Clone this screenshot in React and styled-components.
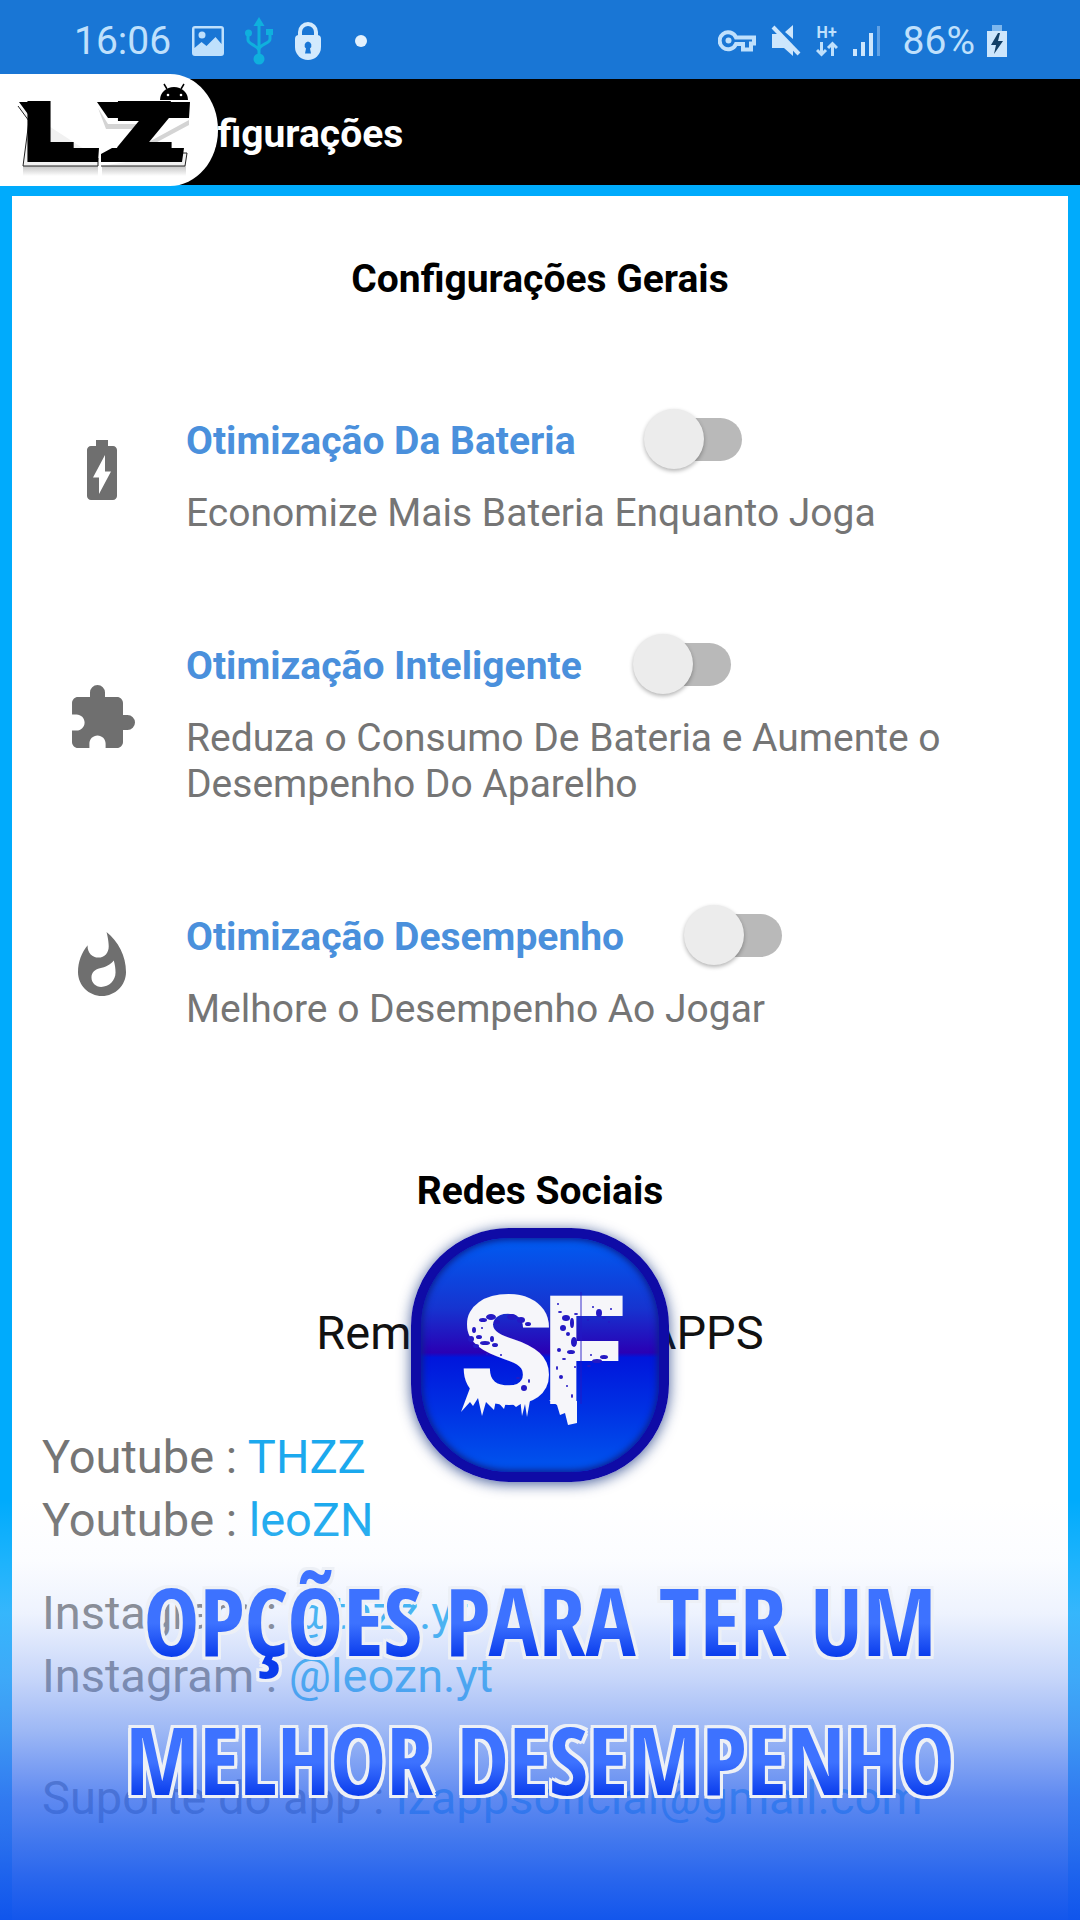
import React, { useState } from "react";
import styled, { createGlobalStyle } from "styled-components";
import { MdBatteryChargingFull, MdExtension, MdWhatshot } from "react-icons/md";

const GlobalStyle = createGlobalStyle`
  *, *::before, *::after { box-sizing: border-box; }
  body {
    margin: 0;
    background: #00abfc;
    font-family: Roboto, "Liberation Sans", sans-serif;
  }
  h1, h2, h3, p { margin: 0; font-weight: inherit; }
`;

const Page = styled.div`
  position: relative;
  display: flex;
  flex-direction: column;
  min-height: 100vh;
  overflow: hidden;
`;

/* ---------- status bar ---------- */

const StatusBar = styled.div`
  display: flex;
  align-items: center;
  justify-content: space-between;
  height: 79px;
  padding: 2px 73px 0 74px;
  background: #1976d5;
  color: #bfe0fc;
  font-size: 39px;
  line-height: 46px;
`;

const StatusGroup = styled.div`
  display: flex;
  align-items: center;
  gap: ${(p) => p.$gap}px;
`;

const Dot = styled.span`
  width: 12px;
  height: 12px;
  margin-left: 12px;
  border-radius: 50%;
  background: #e3f1fd;
`;

const Network = styled.div`
  display: flex;
  flex-direction: column;
  align-items: center;
  font-size: 16px;
  font-weight: 700;
  line-height: 16px;
`;

const PictureIcon = () => (
  <svg width="32" height="30" viewBox="0 0 32 30" fill="#bfe0fc">
    <path
      fillRule="evenodd"
      d="M3 0h26a3 3 0 0 1 3 3v24a3 3 0 0 1-3 3H3a3 3 0 0 1-3-3V3a3 3 0 0 1 3-3ZM2.500 2.500V22l7-6 5 4 9-9 6 7V2.500Z"
    />
    <circle cx="10" cy="9" r="3.500" />
  </svg>
);

const UsbIcon = () => (
  <svg width="28" height="48" viewBox="0 0 28 48" fill="none" stroke="#0fb0dd" strokeWidth="3">
    <path d="M14 6v36M3 17v6c0 4 11 6 11 11M25 14v8c0 5-11 5-11 11" />
    <g fill="#0fb0dd" stroke="none">
      <path d="M14 0l5.500 9h-11zM21 12h7v6h-7z" />
      <circle cx="3.500" cy="16" r="3.500" />
      <circle cx="14" cy="42" r="5.500" />
    </g>
  </svg>
);

const LockIcon = () => (
  <svg width="28" height="38" viewBox="0 0 28 38">
    <path d="M6 18v-8a8 8 0 0 1 16 0v8" fill="none" stroke="#d3eafd" strokeWidth="4" />
    <path d="M1 17q0-4 4-4h18q4 0 4 4v8a13 13 0 0 1-26 0z" fill="#d3eafd" />
    <path d="M14 19.500a4 4 0 0 1 2 7l1 5h-6l1-5a4 4 0 0 1 2-7z" fill="#1976d5" />
  </svg>
);

const KeyIcon = () => (
  <svg width="38" height="22" viewBox="0 0 38 22" fill="none" stroke="#bfe0fc" strokeWidth="4">
    <path d="M18 7.500h18v6h-3v6h-8v-5.500h-7a8.500 8.500 0 1 1 0-6.500z" />
    <circle cx="10.500" cy="10.500" r="3" fill="#bfe0fc" stroke="none" />
  </svg>
);

const MuteIcon = () => (
  <svg width="30" height="32" viewBox="0 0 30 32" fill="#cde6fc">
    <path d="M1 9h8l13 13v9l-9-8H1zM14 7l8-7v14z" />
    <path d="M2 2l26 27" stroke="#cde6fc" strokeWidth="4" />
  </svg>
);

const ArrowsIcon = () => (
  <svg width="22" height="16" viewBox="0 0 22 16" fill="none" stroke="#bfe0fc" strokeWidth="3">
    <path d="M5.500 1v12M1 9l4.500 4.500L10 9M16.500 15V3M12 7l4.500-4.500L21 7" />
  </svg>
);

const SignalIcon = () => (
  <svg width="28" height="30" viewBox="0 0 28 30" fill="#cde6fc">
    <path d="M0 23h4v7H0zM8 16h4v14H8zM16 7h4v23h-4z" />
    <path d="M24 0h3v30h-3z" opacity="0.4" />
  </svg>
);

const ChargeIcon = () => (
  <svg width="20" height="32" viewBox="0 0 20 32">
    <path d="M5 0h10v7H5z" fill="#7db7ee" />
    <path d="M0 6h20v26H0z" fill="#cde6fc" />
    <path d="M11 8L4 20h5L7 29l9-13h-5l2-8z" fill="#123f66" />
  </svg>
);

/* ---------- app bar ---------- */

const AppBar = styled.header`
  position: relative;
  display: flex;
  align-items: center;
  height: 106px;
  padding: 4px 0 0 148px;
  background: #000;
`;

const BarTitle = styled.h1`
  color: #fff;
  font-size: 39px;
  font-weight: 700;
  line-height: 46px;
`;

const BrandTab = styled.div`
  position: absolute;
  left: 0;
  top: -5px;
  width: 218px;
  height: 112px;
  border-radius: 0 48px 48px 0 / 0 56px 56px 0;
  background: #fff;
`;

const BrandLogo = () => (
  <svg width="218" height="112" viewBox="0 0 218 112" role="img" aria-label="LZ">
    <defs>
      <linearGradient id="fade" x1="0" y1="0" x2="0" y2="1">
        <stop offset="0" stopColor="#c4c4c4" />
        <stop offset="1" stopColor="#fff" />
      </linearGradient>
    </defs>
    <path d="M23 92h75v10H23zM102 92h84v10h-84z" fill="url(#fade)" />
    <path d="M98 34l10 16h30v5h-32zM146 74l43-23v-5l-44 24z" fill="#d4d4d4" />
    <path d="M18 32l11 15-6 45h75v-8M101 92h84l2-13h-4" fill="#f1f1f1" stroke="#222" strokeWidth="1" />
    <path d="M19 28h30v15H30zM50 74h49l-1 14H50z" />
    <path d="M97 28h93l-1 16h-81zM112 74h72l-2 14h-81v-8z" />
    <g
      fontFamily='"DejaVu Sans", sans-serif'
      fontWeight="700"
      fontSize="70"
      stroke="#000"
      strokeWidth="10"
      strokeLinejoin="miter"
    >
      <text x="26" y="83">L</text>
      <text x="119" y="83">Z</text>
    </g>
    <path d="M160 26a14 13 0 0 1 28 0z" />
    <path d="M167 15l-3-5M181 15l3-5" stroke="#000" strokeWidth="1.500" />
    <circle cx="168" cy="21" r="1.300" fill="#fff" />
    <circle cx="181" cy="21" r="1.300" fill="#fff" />
  </svg>
);

/* ---------- settings panel ---------- */

const Panel = styled.main`
  flex: 1;
  display: flex;
  flex-direction: column;
  margin: 11px 12px 0;
  padding: 60px 30px 90px;
  background: #fff;
`;

const SectionTitle = styled.h2`
  color: #000;
  font-size: 39px;
  font-weight: 700;
  line-height: 46px;
  text-align: center;
`;

const OptionList = styled.div`
  display: flex;
  flex-direction: column;
  gap: 93px;
  padding: 102px 72px 136px 24px;
`;

const Option = styled.div`
  display: flex;
  align-items: center;
  gap: 48px;
`;

const OptionIcon = styled.div`
  display: flex;
  flex: none;
  color: #6f6f6f;
  font-size: 72px;
`;

const OptionText = styled.div`
  display: flex;
  flex: 1;
  flex-direction: column;
  gap: 12px;
`;

const OptionHead = styled.div`
  display: flex;
  align-items: center;
  gap: ${(p) => p.$gap}px;
  height: 74px;
`;

const OptionLabel = styled.label`
  color: #4a90dc;
  font-size: 39px;
  font-weight: 700;
  line-height: 46px;
`;

const OptionNote = styled.p`
  color: #757575;
  font-size: 39px;
  line-height: 46px;
`;

const Switch = styled.input`
  appearance: none;
  display: grid;
  align-items: center;
  width: 98px;
  height: 62px;
  margin: 0 0 4px;
  cursor: pointer;

  &::before,
  &::after {
    content: "";
    grid-area: 1 / 1;
  }
  &::before {
    height: 43px;
    margin-left: 14px;
    border-radius: 22px;
    background: ${(p) => (p.checked ? "#9cc6f5" : "#b9b9b9")};
  }
  &::after {
    justify-self: ${(p) => (p.checked ? "end" : "start")};
    width: 60px;
    height: 60px;
    border-radius: 50%;
    background: ${(p) => (p.checked ? "#4a90dc" : "#ececec")};
    box-shadow: 0 2px 4px rgba(0, 0, 0, 0.3);
  }
`;

/* ---------- social section ---------- */

const Credits = styled.div`
  position: relative;
  display: flex;
  flex-direction: column;
`;

const CreditLine = styled.p`
  padding: 87px 0 61px;
  color: #111;
  font-size: 47px;
  line-height: 63px;
  text-align: center;
`;

const AppBadge = styled.div`
  position: absolute;
  top: 60px;
  left: 50%;
  width: 258px;
  height: 254px;
  margin-left: -129px;
  border: 10px solid #0f0ba6;
  border-radius: 98px;
  background: linear-gradient(#005cf2 0%, #1634d0 30%, #2a00b4 49%, #0016dc 51%, #0032e4 74%, #0056ee 100%);
  box-shadow: 0 2px 14px rgba(8, 40, 120, 0.75), inset 0 0 6px 2px #0c2090;
`;

/* worn-paint specks on the badge letters: x, y, rx, ry */
const SPECKS = [
  [62, 82, 4, 2], [70, 79, 5, 3], [76, 84, 3, 2], [91, 79, 5, 3], [100, 82, 4, 3], [107, 86, 3, 2],
  [53, 92, 2, 3], [50, 101, 3, 3], [58, 99, 3, 2], [64, 105, 5, 2], [55, 108, 3, 2], [71, 101, 2, 3],
  [74, 107, 3, 2], [61, 90, 1, 1], [80, 117, 1, 1], [66, 116, 1, 1], [84, 92, 2, 1], [97, 140, 2, 1],
  [103, 150, 3, 3], [108, 143, 1, 2], [139, 74, 2, 1], [145, 80, 4, 3], [151, 85, 2, 5], [142, 90, 3, 3],
  [147, 96, 2, 2], [155, 76, 2, 1], [137, 66, 1, 1], [153, 104, 3, 5], [150, 114, 4, 2], [138, 112, 2, 2],
  [143, 121, 2, 1], [136, 130, 1, 2], [154, 129, 1, 1], [140, 139, 2, 2], [146, 148, 1, 1], [151, 158, 1, 2],
  [178, 75, 3, 4], [183, 80, 2, 1], [172, 69, 1, 1], [190, 71, 1, 1], [188, 84, 1, 1], [167, 82, 1, 1],
  [176, 123, 5, 2], [183, 119, 4, 2], [168, 128, 2, 1], [170, 117, 1, 1],
];

const BadgeLogo = () => (
  <svg width="238" height="234" viewBox="0 0 238 234" role="img" aria-label="SF">
    <g fontFamily='Roboto, "Liberation Sans", sans-serif' fontWeight="900" fontSize="152" fill="#f6f6fa">
      <text x="38" y="166">S</text>
      <text x="121" y="166">F</text>
    </g>
    <g fill="#f6f6fa">
      <path d="M52 142l-12 32 9-10 3 4 5-8 4 18 4-14 8 8 2-10 8 9 3-10 9 8 12-8-8-10z" />
      <path d="M99 160l2 18 3-12 2 13 4-22z" />
      <path d="M128 162l8 5 3 10 5-2 3 12 9-2v-22z" />
    </g>
    <g fill="#2519c4">
      {SPECKS.map(([x, y, rx, ry]) => (
        <ellipse key={`${x}-${y}`} cx={x} cy={y} rx={rx} ry={ry} />
      ))}
    </g>
    <path d="M160 54v112" stroke="#2519c4" strokeWidth="1.500" opacity="0.6" />
  </svg>
);

const ContactGroup = styled.div`
  margin-top: ${(p) => p.$space || 0}px;
  color: #757575;
  font-size: 47px;
  line-height: 63px;
`;

const ContactLink = styled.a`
  color: #1ba9ee;
  text-decoration: none;
`;

/* ---------- promotional caption ---------- */

const Caption = styled.div`
  position: absolute;
  right: 0;
  bottom: 0;
  left: 0;
  display: flex;
  flex-direction: column;
  align-items: center;
  height: 420px;
  padding-top: 51px;
  pointer-events: none;
  background: linear-gradient(
    rgba(255, 255, 255, 0) 0%,
    rgba(225, 234, 254, 0.12) 14%,
    rgba(193, 211, 251, 0.28) 27%,
    rgba(135, 167, 244, 0.46) 42%,
    rgba(97, 140, 239, 0.62) 55%,
    rgba(60, 112, 238, 0.82) 71%,
    rgba(45, 105, 236, 0.9) 81%,
    rgba(30, 94, 236, 0.95) 90%,
    rgba(16, 84, 236, 0.99) 100%
  );
`;

const CaptionLine = styled.span`
  display: block;
  background: linear-gradient(#3d72ff 52%, #0a3cec 76%);
  background-clip: text;
  color: transparent;
  filter: drop-shadow(3px 0 0 #edf0f6) drop-shadow(-3px 0 0 #edf0f6) drop-shadow(0 3px 0 #edf0f6)
    drop-shadow(0 -3px 0 #edf0f6);
  font-family: "Open Sans Condensed", "Open Sans", sans-serif;
  font-size: 94px;
  font-weight: 700;
  line-height: 139px;
  white-space: nowrap;
`;

const OPTIONS = [
  {
    id: "battery",
    icon: MdBatteryChargingFull,
    label: "Otimização Da Bateria",
    note: "Economize Mais Bateria Enquanto Joga",
    gap: 68,
  },
  {
    id: "smart",
    icon: MdExtension,
    label: "Otimização Inteligente",
    note: "Reduza o Consumo De Bateria e Aumente o Desempenho Do Aparelho",
    gap: 51,
  },
  {
    id: "performance",
    icon: MdWhatshot,
    label: "Otimização Desempenho",
    note: "Melhore o Desempenho Ao Jogar",
    gap: 60,
  },
];

function OptionRow({ id, icon: Icon, label, note, gap }) {
  const [on, setOn] = useState(false);
  return (
    <Option>
      <OptionIcon>
        <Icon />
      </OptionIcon>
      <OptionText>
        <OptionHead $gap={gap}>
          <OptionLabel htmlFor={id}>{label}</OptionLabel>
          <Switch
            id={id}
            type="checkbox"
            role="switch"
            checked={on}
            onChange={(e) => setOn(e.target.checked)}
          />
        </OptionHead>
        <OptionNote>{note}</OptionNote>
      </OptionText>
    </Option>
  );
}

export default function App() {
  return (
    <Page>
      <GlobalStyle />
      <StatusBar>
        <StatusGroup $gap={21}>
          <span>16:06</span>
          <PictureIcon />
          <UsbIcon />
          <LockIcon />
          <Dot />
        </StatusGroup>
        <StatusGroup $gap={22}>
          <StatusGroup $gap={15}>
            <KeyIcon />
            <MuteIcon />
            <Network>
              <span>H+</span>
              <ArrowsIcon />
            </Network>
            <SignalIcon />
          </StatusGroup>
          <StatusGroup $gap={12}>
            <span>86%</span>
            <ChargeIcon />
          </StatusGroup>
        </StatusGroup>
      </StatusBar>

      <AppBar>
        <BarTitle>Configurações</BarTitle>
        <BrandTab>
          <BrandLogo />
        </BrandTab>
      </AppBar>

      <Panel>
        <SectionTitle>Configurações Gerais</SectionTitle>
        <OptionList>
          {OPTIONS.map((option) => (
            <OptionRow key={option.id} {...option} />
          ))}
        </OptionList>

        <Credits>
          <SectionTitle>Redes Sociais</SectionTitle>
          <CreditLine>Remake Por LZ APPS</CreditLine>
          <AppBadge>
            <BadgeLogo />
          </AppBadge>
        </Credits>

        <ContactGroup>
          <p>
            Youtube : <ContactLink href="#thzz">THZZ</ContactLink>
          </p>
          <p>
            Youtube : <ContactLink href="#leozn">leoZN</ContactLink>
          </p>
        </ContactGroup>
        <ContactGroup $space={30}>
          <p>
            Instagram : <ContactLink href="#thzz-yt">@thzz.yt</ContactLink>
          </p>
          <p>
            Instagram : <ContactLink href="#leozn-yt">@leozn.yt</ContactLink>
          </p>
        </ContactGroup>
        <ContactGroup $space={59}>
          <p>
            Suporte do app : <ContactLink href="#suporte">lzappsoficial@gmail.com</ContactLink>
          </p>
        </ContactGroup>
      </Panel>

      <Caption>
        <CaptionLine>OPÇÕES PARA TER UM</CaptionLine>
        <CaptionLine>MELHOR DESEMPENHO</CaptionLine>
      </Caption>
    </Page>
  );
}
